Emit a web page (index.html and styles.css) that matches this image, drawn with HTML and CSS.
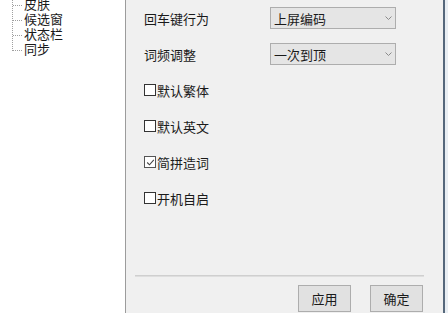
FILE: index.html
```html
<!DOCTYPE html>
<html lang="zh-CN">
<head>
<meta charset="utf-8">
<link rel="stylesheet" href="styles.css">
</head>
<body>
<div class="window">
  <div class="tree">
    <ul class="tree-list">
      <li class="tree-item">皮肤</li>
      <li class="tree-item">候选窗</li>
      <li class="tree-item">状态栏</li>
      <li class="tree-item last">同步</li>
    </ul>
  </div>
  <div class="content">
    <div class="form">
      <div class="row">
        <span class="label">回车键行为</span>
        <div class="select"><span>上屏编码</span><svg class="chev" width="7" height="4" viewBox="0 0 7 4"><polyline points="0.5,0.5 3.5,3.5 6.5,0.5" fill="none" stroke="#8a8a8a" stroke-width="1"/></svg></div>
      </div>
      <div class="row">
        <span class="label">词频调整</span>
        <div class="select"><span>一次到顶</span><svg class="chev" width="7" height="4" viewBox="0 0 7 4"><polyline points="0.5,0.5 3.5,3.5 6.5,0.5" fill="none" stroke="#8a8a8a" stroke-width="1"/></svg></div>
      </div>
      <div class="row">
        <span class="check"></span><span class="check-label">默认繁体</span>
      </div>
      <div class="row">
        <span class="check"></span><span class="check-label">默认英文</span>
      </div>
      <div class="row">
        <span class="check checked"><svg width="9" height="9" viewBox="0 0 9 9"><polyline points="1.2,4.5 3.5,6.8 7.8,1.8" fill="none" stroke="#444" stroke-width="1.1"/></svg></span><span class="check-label">简拼造词</span>
      </div>
      <div class="row">
        <span class="check"></span><span class="check-label">开机自启</span>
      </div>
    </div>
    <div class="separator"></div>
    <div class="buttons">
      <button class="btn">应用</button>
      <button class="btn">确定</button>
    </div>
  </div>
  <div class="frame-edge"></div>
</div>
</body>
</html>
```
FILE: styles.css
```css
html, body {
  margin: 0;
  padding: 0;
}
body {
  font-family: "Noto Sans CJK SC", "Noto Sans", sans-serif;
  font-size: 13px;
  color: #1a1a1a;
  background: #f0f0f0;
}
.window {
  display: flex;
  width: 448px;
  height: 313px;
  overflow: hidden;
}
.tree {
  width: 125px;
  flex: none;
  background: #ffffff;
  border-right: 1px solid #9c9c9c;
  overflow: hidden;
}
.tree-list {
  list-style: none;
  margin: -4px 0 0 12px;
  padding: 0;
  position: relative;
}
.tree-list::before {
  content: "";
  position: absolute;
  left: 0;
  top: -10px;
  height: 65px;
  border-left: 1px dotted #a0a0a0;
}
.tree-item {
  position: relative;
  height: 15px;
  line-height: 15px;
  padding-left: 12px;
  white-space: nowrap;
}
.tree-item::before {
  content: "";
  position: absolute;
  left: 1px;
  top: 9px;
  width: 9px;
  border-top: 1px dotted #a0a0a0;
}
.content {
  flex: 1;
  display: flex;
  flex-direction: column;
  background: #f0f0f0;
}
.form {
  display: flex;
  flex-direction: column;
  padding-left: 18px;
}
.row {
  height: 36px;
  display: flex;
  align-items: center;
}
.label {
  width: 126px;
  line-height: 15px;
}
.select {
  height: 20px;
  border: 1px solid #adadad;
  background: #e5e5e5;
  display: flex;
  align-items: center;
  justify-content: space-between;
  padding: 0 3px 0 3px;
  width: 118px;
  line-height: 15px;
}
.check {
  width: 10px;
  height: 10px;
  border: 1px solid #333;
  background: #fff;
  display: flex;
  align-items: center;
  justify-content: center;
  margin-right: 1px;
}
.check.checked {
  border-color: #555;
}
.check-label {
  line-height: 15px;
}
.separator {
  margin: auto 19px 0 9px;
  height: 1px;
  border-top: 1px solid #cfcfcf;
  background: #dedede;
}
.buttons {
  display: flex;
  justify-content: flex-end;
  gap: 19px;
  padding-right: 20px;
  margin-top: 8px;
  margin-bottom: 1px;
}
.btn {
  width: 53px;
  height: 27px;
  border: 1px solid #adadad;
  background: #e1e1e1;
  font-family: inherit;
  font-size: 13px;
  color: #1a1a1a;
  padding: 0;
  line-height: 15px;
}
.frame-edge {
  width: 5px;
  flex: none;
  background: #e9eef3;
  border-left: 2px solid #56687c;
  box-sizing: border-box;
}
```
